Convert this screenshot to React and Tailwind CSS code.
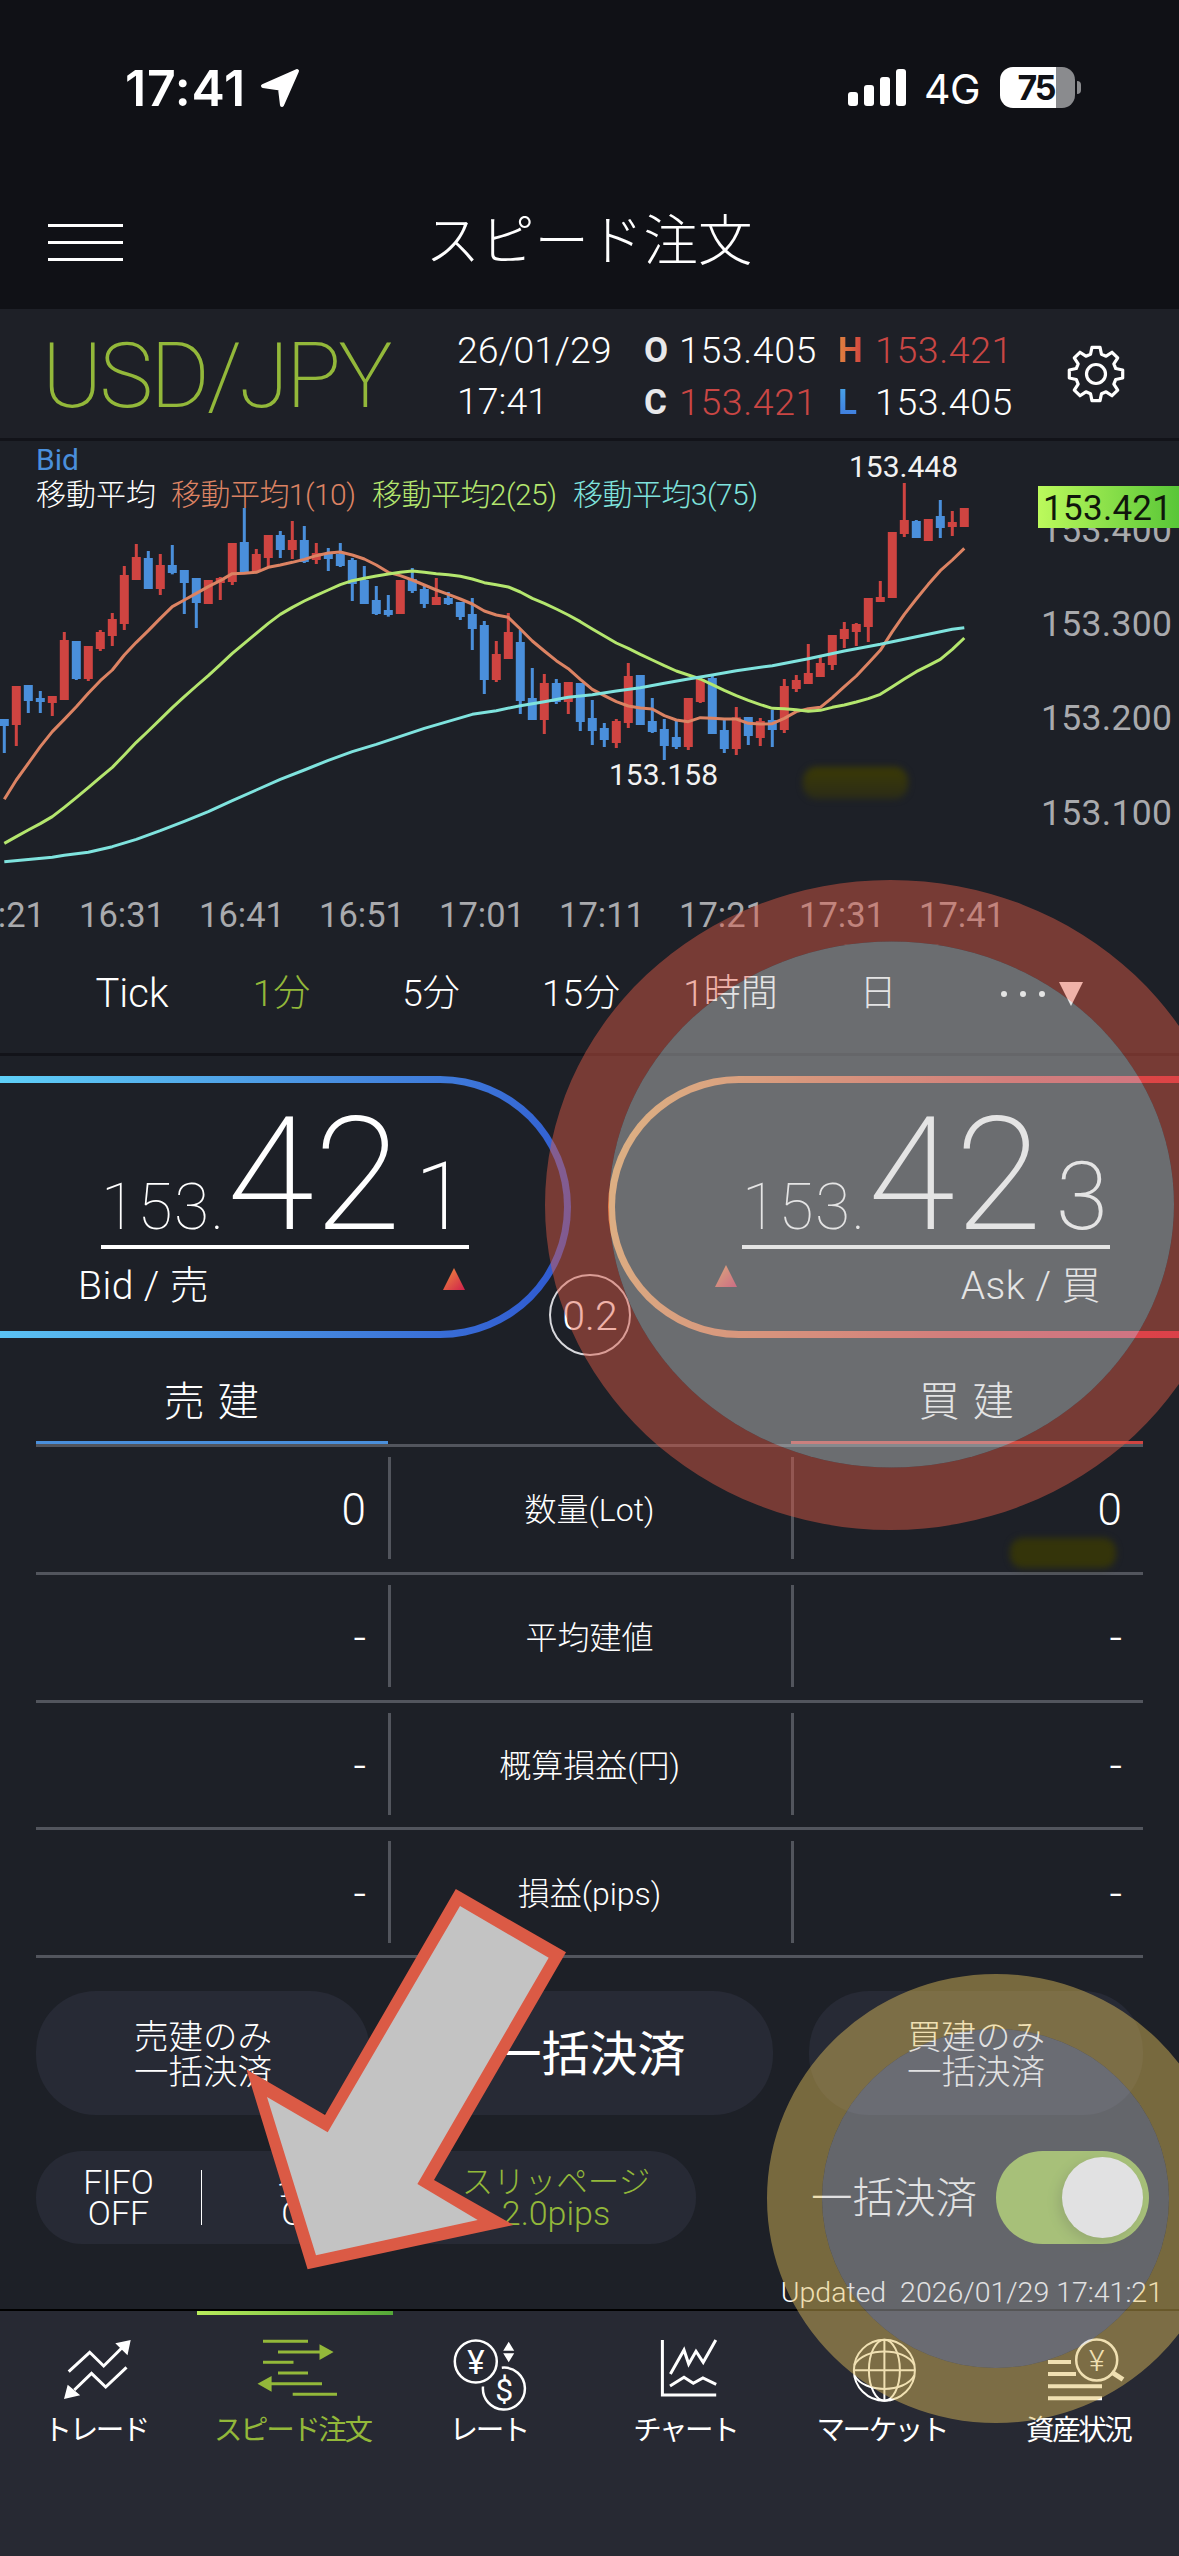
const candles = [
  // [up, bodyTop, bodyBottom, high, low]
  [0, 867, 888, 867, 969], [1, 768, 885, 768, 948], [0, 765, 813, 765, 849], [0, 804, 816, 783, 849],
  [1, 798, 819, 798, 858], [1, 630, 810, 606, 810], [0, 633, 747, 633, 750], [1, 648, 747, 648, 753],
  [1, 606, 657, 600, 663], [1, 567, 618, 549, 648], [1, 435, 582, 408, 600], [1, 381, 450, 342, 450],
  [0, 384, 477, 363, 477], [1, 405, 477, 372, 495], [0, 405, 429, 345, 433], [0, 420, 459, 420, 552],
  [0, 444, 519, 444, 594], [1, 450, 522, 450, 522], [1, 444, 459, 441, 510], [1, 339, 456, 339, 465],
  [0, 336, 426, 234, 426], [1, 372, 426, 357, 426], [1, 315, 384, 315, 414], [0, 315, 360, 303, 384],
  [1, 330, 360, 273, 387], [0, 330, 396, 288, 399], [1, 369, 390, 339, 402], [0, 372, 387, 354, 423],
  [0, 372, 408, 339, 411], [0, 390, 462, 384, 513], [0, 450, 522, 408, 522], [0, 510, 552, 468, 555],
  [0, 540, 555, 495, 560], [1, 450, 552, 450, 552], [0, 447, 483, 414, 489], [0, 477, 522, 468, 534],
  [1, 501, 525, 444, 525], [0, 504, 522, 486, 525], [0, 516, 561, 516, 570], [0, 552, 597, 504, 660],
  [0, 585, 750, 573, 792], [1, 672, 750, 633, 756], [1, 606, 687, 549, 687], [0, 636, 813, 600, 852],
  [0, 804, 870, 714, 870], [1, 759, 870, 732, 912], [0, 759, 816, 747, 822], [1, 756, 816, 756, 852],
  [0, 759, 876, 759, 903], [0, 864, 903, 810, 945], [0, 894, 930, 879, 951], [1, 873, 939, 867, 954],
  [1, 738, 879, 699, 894], [0, 735, 885, 735, 885], [0, 873, 906, 804, 909], [0, 897, 948, 867, 990],
  [0, 921, 951, 870, 957], [1, 804, 951, 804, 960], [1, 747, 816, 744, 819], [0, 744, 912, 738, 912],
  [0, 900, 957, 867, 969], [1, 862, 957, 831, 975], [0, 861, 918, 861, 945], [1, 873, 924, 864, 948],
  [0, 870, 900, 840, 951], [1, 768, 900, 747, 909], [1, 750, 777, 735, 786], [1, 729, 762, 642, 762],
  [1, 699, 741, 681, 741], [1, 615, 705, 615, 720], [1, 597, 627, 576, 654], [1, 582, 606, 579, 648],
  [1, 504, 591, 504, 636], [1, 501, 516, 453, 516], [1, 306, 504, 306, 504], [1, 270, 312, 159, 321],
  [0, 273, 324, 270, 324], [1, 267, 333, 267, 333], [0, 258, 294, 210, 324], [1, 276, 291, 243, 318],
  [1, 234, 291, 234, 291],
];

const ma10 = [
  1108, 1050, 1000, 950, 905, 868, 830, 790, 752, 720, 675, 637, 602, 565, 530, 510, 490, 470, 452, 431, 430,
  427, 412, 405, 397, 388, 377, 369, 366, 375, 387, 405, 427, 437, 450, 465, 480, 493, 507, 522, 543, 555, 562,
  597, 633, 663, 692, 716, 748, 778, 797, 815, 828, 834, 837, 857, 870, 875, 863, 865, 867, 867, 880, 882, 881,
  865, 845, 836, 832, 803, 770, 738, 700, 661, 605, 553, 507, 463, 422, 390, 355,
];

const ma25 = [
  1240, 1220, 1200, 1181, 1160, 1132, 1103, 1073, 1042, 1012, 975, 937, 903, 868, 833, 800, 768, 737, 704, 670,
  640, 610, 580, 553, 532, 513, 496, 480, 464, 452, 445, 438, 432, 427, 423, 427, 431, 434, 439, 447, 458, 464,
  471, 486, 505, 520, 537, 555, 575, 597, 618, 639, 655, 673, 690, 707, 723, 735, 747, 764, 781, 797, 811, 824,
  835, 836, 839, 844, 841, 832, 825, 816, 806, 793, 770, 747, 725, 707, 688, 658, 624,
];

const ma75 = [
  [0, 1295], [4, 1282], [5, 1276], [7, 1267], [9, 1250], [11, 1228], [13, 1202], [15, 1174], [17, 1145],
  [19, 1112], [21, 1080], [23, 1048], [25, 1020], [27, 991], [29, 965], [31, 943], [33, 919], [35, 895],
  [37, 874], [39, 853], [41, 842], [43, 827], [45, 815], [47, 802], [49, 794], [51, 783], [53, 773],
  [55, 760], [57, 747], [59, 735], [61, 722], [64, 707], [67, 686], [70, 663], [73, 643], [76, 620],
  [79, 598], [80, 593],
];

const cx = i => 4.3 + i * 12;
const cy = v => v / 3 - 11;
const toPoints = pairs => pairs.map(([i, v]) => `${cx(i)},${cy(v)}`).join(' ');

const times = ['16:21', '16:31', '16:41', '16:51', '17:01', '17:11', '17:21', '17:31', '17:41'];

const rows = [
  { label: '数量(Lot)', sell: '0', buy: '0' },
  { label: '平均建値', sell: '-', buy: '-' },
  { label: '概算損益(円)', sell: '-', buy: '-' },
  { label: '損益(pips)', sell: '-', buy: '-' },
];

function StatusBar() {
  return (
    <div className="flex h-[108px] items-end justify-between pl-[125px] pr-[98px] font-['Inter',sans-serif]">
      <div className="flex items-end gap-[12px]">
        <span className="w-[123px] text-[50px] leading-[40px] font-semibold tracking-[0.800px] whitespace-nowrap">17:41</span>
        <svg width="40" height="40" viewBox="0 0 40 40">
          <path d="M37 3 L3 18 L20 20.500 L22 37 Z" fill="white" stroke="white" strokeWidth="4" strokeLinejoin="round" />
        </svg>
      </div>
      <div className="flex items-end">
        <svg width="60" height="38" viewBox="0 0 60 38" fill="white" className="mb-[2px]">
          <rect x="0" y="24" width="10" height="14" rx="3" />
          <rect x="16" y="17" width="10" height="21" rx="3" />
          <rect x="32" y="9" width="10" height="29" rx="3" />
          <rect x="48" y="1" width="10" height="37" rx="3" />
        </svg>
        <span className="ml-[16px] w-[76px] text-[41px] leading-[37px] tracking-[-0.500px]">4G</span>
        <div className="flex items-center">
          <div className="flex h-[41px] w-[75px] items-center justify-center rounded-[13px] bg-[linear-gradient(90deg,#fff_75%,#8a8b8e_75%)]">
            <span className="mr-[3px] text-[34px] font-bold tracking-[-2px] text-[#101116]">75</span>
          </div>
          <div className="ml-[2px] h-[13px] w-[4px] rounded-r-full bg-[#8a8b8e]" />
        </div>
      </div>
    </div>
  );
}

function TitleBar() {
  return (
    <div className="flex h-[201px] items-center pl-[48px]">
      <div className="mt-[68px] flex w-[75px] flex-col gap-[14px]">
        <div className="h-[3px] bg-white" />
        <div className="h-[3px] bg-white" />
        <div className="h-[3px] bg-white" />
      </div>
      <h1 className="mt-[64px] w-[932px] text-center text-[54.500px] leading-[80px] font-light">スピード注文</h1>
    </div>
  );
}

function GearIcon() {
  const teeth = 8;
  const pts = [];
  for (let k = 0; k < teeth; k++) {
    const a = (k * 2 * Math.PI) / teeth - Math.PI / 2;
    [[-0.27, 20.5], [-0.15, 27], [0.15, 27], [0.27, 20.5]].forEach(([d, r]) => {
      pts.push(`${30 + r * Math.cos(a + d)},${30 + r * Math.sin(a + d)}`);
    });
  }
  return (
    <svg width="60" height="60" viewBox="0 0 60 60" fill="none" stroke="white" strokeWidth="3.200" strokeLinejoin="round">
      <polygon points={pts.join(' ')} />
      <circle cx="30" cy="30" r="9.500" />
    </svg>
  );
}

function PairHeader() {
  return (
    <div className="flex h-[132px] border-b-[3px] border-[#121319] bg-[#1e2027]">
      <div className="w-[457px] pt-[14px] pl-[42px] text-[91px] leading-[106px] font-extralight tracking-[-3px] text-[#93b83a]">USD/JPY</div>
      <div className="w-[187px] pt-[16px] text-[37.500px] leading-[51px] font-light">
        <div>26/01/29</div>
        <div>17:41</div>
      </div>
      <div className="grid h-[119px] grid-cols-[35px_159px_37px_153px] pt-[16px] text-[37.500px] leading-[51px] font-light tracking-[0.600px]">
        <b className="text-[35px] font-bold text-[#e8e8ea]">O</b>
        <span>153.405</span>
        <b className="text-[35px] font-bold"><span className="bg-gradient-to-r from-[#e0843f] to-[#d2403f] bg-clip-text text-transparent">H</span></b>
        <span className="text-[#c94644]">153.421</span>
        <b className="text-[35px] font-bold text-[#e8e8ea]">C</b>
        <span className="text-[#c94644]">153.421</span>
        <b className="text-[35px] font-bold"><span className="bg-gradient-to-b from-[#4aa8e8] to-[#3f74dc] bg-clip-text text-transparent">L</span></b>
        <span>153.405</span>
      </div>
      <div className="ml-[38px] pt-[35px]"><GearIcon /></div>
    </div>
  );
}

function Chart() {
  return (
    <svg width="1179" height="499" viewBox="0 0 1179 499" className="block">
      <defs>
        <linearGradient id="badge">
          <stop offset="0" stopColor="#bcfa5c" />
          <stop offset="1" stopColor="#58c637" />
        </linearGradient>
        <linearGradient id="smear" x2="0" y2="1">
          <stop offset="0" stopColor="#3b3a05" />
          <stop offset="1" stopColor="#2b2c18" />
        </linearGradient>
      </defs>
      <g fontSize="30">
        <text x="36" y="29" fill="#4a8fdb">Bid</text>
        <g fontWeight="300">
          <text x="36" y="64" fill="#fff">移動平均</text>
          <text x="171" y="64" fill="#dc8363" textLength="185">移動平均1(10)</text>
          <text x="372" y="64" fill="#b4e66e" textLength="185">移動平均2(25)</text>
          <text x="573" y="64" fill="#7fe3de" textLength="185">移動平均3(75)</text>
        </g>
        <text x="849" y="36" fill="#f2f2f2">153.448</text>
        <text x="609" y="344" fill="#f2f2f2">153.158</text>
      </g>
      {candles.map(([up, top, bottom, high, low], i) => (
        <g key={i} fill={up ? '#cf4441' : '#4a8fdb'}>
          <rect x={cx(i) - 1.5} y={cy(high)} width="3" height={(low - high) / 3} />
          <rect x={cx(i) - 4.5} y={cy(top)} width="9" height={(bottom - top) / 3} />
        </g>
      ))}
      <g fill="none" strokeWidth="3" strokeLinejoin="round">
        <polyline points={toPoints(ma10.map((v, i) => [i, v]))} stroke="#dc8363" />
        <polyline points={toPoints(ma25.map((v, i) => [i, v]))} stroke="#b4e66e" />
        <polyline points={toPoints(ma75)} stroke="#7fe3de" />
      </g>
      <rect x="803" y="326" width="105" height="32" rx="14" fill="url(#smear)" className="blur-[3px]" />
      <g fontSize="35.500" fill="#a9aaad">
        <text x="1041" y="101" textLength="131">153.400</text>
        <text x="1041" y="195" textLength="131">153.300</text>
        <text x="1041" y="289" textLength="131">153.200</text>
        <text x="1041" y="384" textLength="131">153.100</text>
        {times.map((t, i) => (
          <text key={t} x={2 + i * 120} y="486" textAnchor="middle" fontSize="34.500">{t}</text>
        ))}
      </g>
      <rect x="1038" y="45" width="141" height="42" fill="url(#badge)" />
      <text x="1043" y="79" fontSize="35" textLength="129" fill="#10160c">153.421</text>
    </svg>
  );
}

function PeriodTabs() {
  return (
    <div className="flex h-[116px] items-center border-b-[3px] border-[#121319] pb-[5px] pl-[57px] text-[37px] font-light">
      <div className="w-[150px] text-center text-[40px]">Tick</div>
      <div className="w-[149px] text-center text-[#93b83a]">1分</div>
      <div className="w-[150px] text-center">5分</div>
      <div className="w-[150px] text-center">15分</div>
      <div className="w-[149px] text-center">1時間</div>
      <div className="w-[146px] text-center">日</div>
      <div className="flex items-center pl-[49px]">
        <svg width="84" height="26" viewBox="0 0 84 26" fill="white">
          <circle cx="4" cy="13" r="3" />
          <circle cx="23" cy="13" r="3" />
          <circle cx="42" cy="13" r="3" />
          <path d="M59 1 H83 L71 25 Z" />
        </svg>
      </div>
    </div>
  );
}

function Price({ head, big, last }) {
  return (
    <div className="flex h-[134px] w-[368px] items-baseline border-b-[4px] border-white leading-[120px]">
      <span className="w-[126px] text-[64px] font-thin tracking-[1.500px]">{head}</span>
      <span className="w-[186px] text-[158px] font-extralight">{big}</span>
      <span className="w-[56px] text-center text-[95px] font-extralight">{last}</span>
    </div>
  );
}

function Triangle() {
  return (
    <svg width="22" height="22" viewBox="0 0 22 22">
      <defs>
        <linearGradient id="tri" x2="1" y2="1">
          <stop offset="0" stopColor="#f0903c" />
          <stop offset="1" stopColor="#d0204c" />
        </linearGradient>
      </defs>
      <path d="M11 0 L22 22 H0 Z" fill="url(#tri)" />
    </svg>
  );
}

function PricePanel() {
  return (
    <div className="relative flex h-[285px] justify-between pt-[20px]">
      <button className="h-[262px] w-[571px] rounded-r-full bg-[linear-gradient(105deg,#5fd0f8_0%,#4a92e2_50%,#2d55cf_100%)] py-[7px] pr-[7px] text-left">
        <div className="flex h-full w-full flex-col rounded-r-full bg-[#1d2027] pt-[32px] pl-[101px]">
          <Price head="153." big="42" last="1" />
          <div className="flex w-[368px] items-center justify-between pt-[9px]">
            <span className="-ml-[23px] text-[39px] leading-[56px] font-light tracking-[0.500px]">Bid / 売</span>
            <span className="mr-[4px] mb-[14px]"><Triangle /></span>
          </div>
        </div>
      </button>
      <button className="h-[262px] w-[571px] rounded-l-full bg-[linear-gradient(105deg,#f3a54c_0%,#e8703f_30%,#df3f3c_65%,#d82a4c_100%)] py-[7px] pl-[7px] text-left">
        <div className="flex h-full w-full flex-col rounded-l-full bg-[#1d2027] pt-[32px] pl-[127px]">
          <Price head="153." big="42" last="3" />
          <div className="flex w-[368px] items-center justify-between pt-[9px]">
            <span className="-ml-[27px] mb-[20px]"><Triangle /></span>
            <span className="mr-[9px] text-[39px] leading-[56px] font-light tracking-[0.500px]">Ask / 買</span>
          </div>
        </div>
      </button>
      <div className="absolute top-[218px] left-[549px] flex h-[82px] w-[82px] items-center justify-center rounded-full border-[2.500px] border-[#d8d8dc] pt-[3px] text-[41px] font-light">0.2</div>
    </div>
  );
}

function Positions() {
  return (
    <div className="px-[36px]">
      <div className="flex h-[106px] items-end justify-between border-b-[3px] border-[#52555d] text-[41px] font-light">
        <div className="flex h-[86px] w-[352px] items-center justify-center border-b-[3px] border-[#4a8fdb] pt-[7px]">
          <span className="tracking-[1.500px]">売 建</span>
        </div>
        <div className="flex h-[86px] w-[352px] items-center justify-center border-b-[3px] border-[#cf4441] pt-[7px]">
          <span className="tracking-[1.500px]">買 建</span>
        </div>
      </div>
      {rows.map(row => (
        <div key={row.label} className="flex h-[127.750px] items-center border-b-[3px] border-[#52555d] pb-[2px] text-[44px] font-light">
          <div className="flex h-[102px] w-[355px] items-center justify-end border-r-[3px] border-[#52555d] pt-[4px] pr-[22px]">{row.sell}</div>
          <div className="flex h-[102px] w-[400px] items-center justify-center pt-[4px] pr-[3px] text-[32px]">{row.label}</div>
          <div className="flex h-[102px] w-[352px] items-center justify-end border-l-[3px] border-[#52555d] pt-[4px] pr-[21px]">{row.buy}</div>
        </div>
      ))}
    </div>
  );
}

function Actions() {
  return (
    <div className="flex h-[351px] flex-col px-[36px] pt-[33px] font-light">
      <div className="flex gap-[36px] text-center">
        <button className="h-[124px] w-[334px] rounded-[60px] bg-[#272a35] pt-[3px] text-[34.500px] leading-[35px]">売建のみ<br />一括決済</button>
        <button className="h-[124px] w-[367px] rounded-[60px] bg-[#272a35] pt-[4px] text-[48px] font-normal">一括決済</button>
        <button className="h-[124px] w-[334px] rounded-[60px] bg-[#272a35] pt-[3px] text-[34.500px] leading-[35px]">買建のみ<br />一括決済</button>
      </div>
      <div className="mt-[36px] flex items-center justify-between">
        <div className="flex h-[93px] w-[660px] items-center rounded-[46px] bg-[#272a35] text-center text-[34px] leading-[31px]">
          <div className="w-[165px]">FIFO<br />OFF</div>
          <div className="h-[55px] w-[1px] bg-white" />
          <div className="w-[220px]">損切<br />OFF</div>
          <div className="w-[270px] pr-[2px] text-[#93b83a]"><span className="text-[31.500px]">スリッページ</span><br />2.0pips</div>
        </div>
        <div className="-mr-[6px] flex items-center gap-[19px]">
          <span className="pt-[4px] text-[41.500px]">一括決済</span>
          <div className="flex h-[93px] w-[153px] items-center justify-end rounded-full bg-[#95c340] pr-[6px]">
            <div className="h-[81px] w-[81px] rounded-full bg-white shadow-[-4px_4px_12px_rgba(0,0,0,0.2)]" />
          </div>
        </div>
      </div>
      <div className="-mr-[20px] mt-[29px] text-right text-[28.500px] leading-[40px] whitespace-pre">Updated  2026/01/29 17:41:21</div>
    </div>
  );
}

function TradeIcon() {
  return (
    <svg width="88" height="76" viewBox="0 0 88 76" fill="none" stroke="currentColor" strokeWidth="3">
      <path d="M14.700 35.700 L35.700 16.300 L49.700 30 L68.500 11.300" />
      <path d="M72.500 31.300 L51.700 51 L37.500 37.300 L20.300 54" />
      <path d="M76.700 4 L61.300 7.300 L73.500 19.300 Z M10 63 L13.700 48.700 L26.200 59.300 Z" fill="currentColor" stroke="none" />
    </svg>
  );
}

function SpeedIcon() {
  return (
    <svg width="88" height="76" viewBox="0 0 88 76" fill="none" stroke="currentColor" strokeWidth="3">
      <path d="M12 5.300 H57 M27 16 H69 M12 26.300 H42.500 M27 37 H57 M20 47.700 H71 M41.700 58.300 H86" />
      <path d="M82.600 16 L68.500 8.300 V24 Z M6.500 47.700 L20.600 40 V55.700 Z" fill="currentColor" stroke="none" />
    </svg>
  );
}

function RateIcon() {
  return (
    <svg width="88" height="76" viewBox="0 0 88 76" fill="none" stroke="currentColor" strokeWidth="2.500">
      <circle cx="28.800" cy="25.500" r="21" />
      <path d="M54.800 31.700 A21 21 0 1 1 36 50.500" />
      <path d="M61.700 5.700 L67.200 14.700 H56.200 Z M61.700 26.300 L67.200 17.300 H56.200 Z" fill="currentColor" stroke="none" />
      <g fill="currentColor" stroke="none" fontSize="33" textAnchor="middle">
        <text x="28.800" y="37.500">¥</text>
        <text x="57.300" y="64.500" fontSize="32">$</text>
      </g>
    </svg>
  );
}

function ChartIcon() {
  return (
    <svg width="88" height="76" viewBox="0 0 88 76" fill="none" stroke="currentColor" strokeWidth="3">
      <path d="M18.400 4 V59 H72.200" />
      <path d="M26.400 38 L40 14 L44.700 28 L52 15.300 L59.200 26.300 L71.800 4" />
      <path d="M26 50 L40 41.300 L49.300 47.300 L58.900 42 L72.200 48.300" />
    </svg>
  );
}

function GlobeIcon() {
  return (
    <svg width="88" height="76" viewBox="0 0 88 76" fill="none" stroke="currentColor" strokeWidth="2">
      <circle cx="44.400" cy="34.200" r="30.500" />
      <ellipse cx="44.400" cy="34.200" rx="15.500" ry="30.500" />
      <path d="M44.400 3.700 V64.700 M13.900 34.200 H74.900" />
      <path d="M14.500 29 C24 11 65 11 74.300 29 M14.500 39.400 C24 57.400 65 57.400 74.300 39.400" />
    </svg>
  );
}

function AssetsIcon() {
  return (
    <svg width="88" height="76" viewBox="0 0 88 76" fill="none" stroke="currentColor" strokeWidth="4">
      <path d="M11 26 H34 M11 38 H39 M11 50.300 H65 M11 62.300 H65" />
      <circle cx="59.700" cy="24" r="20.500" strokeWidth="2.500" />
      <path d="M74.500 36 L86 43.500" strokeWidth="5" />
      <text x="59.700" y="35" fontSize="30" fontWeight="300" textAnchor="middle" fill="currentColor" stroke="none">¥</text>
    </svg>
  );
}

const tabs = [
  { label: 'トレード', Icon: TradeIcon },
  { label: 'スピード注文', Icon: SpeedIcon, active: true },
  { label: 'レート', Icon: RateIcon },
  { label: 'チャート', Icon: ChartIcon },
  { label: 'マーケット', Icon: GlobeIcon },
  { label: '資産状況', Icon: AssetsIcon },
];

function BottomNav() {
  return (
    <nav className="grid h-[247px] grid-cols-6 border-t-2 border-black bg-[#272933]">
      {tabs.map(({ label, Icon, active }) => (
        <div key={label} className={`flex flex-col items-center ${active ? 'text-[#93b83a]' : 'text-white'}`}>
          <div className={`h-[4px] w-full ${active ? 'bg-gradient-to-r from-[#b9ec5c] to-[#54a838]' : ''}`} />
          <div className="mt-[21px]"><Icon /></div>
          <span className="-mt-[3px] -ml-[5px] text-[28.500px] leading-[44px] tracking-[-2.400px] whitespace-nowrap">{label}</span>
        </div>
      ))}
    </nav>
  );
}

function Annotations() {
  return (
    <svg width="1179" height="2556" viewBox="0 0 1179 2556" className="pointer-events-none absolute top-0 left-0">
      <rect x="1010" y="1538" width="106" height="30" rx="13" fill="#34340a" className="blur-[3px]" />
      <path
        fillRule="evenodd"
        fill="rgb(222 90 71 / 0.465)"
        d="M545 1205 a345.500 325 0 1 0 691 0 a345.500 325 0 1 0 -691 0 Z M609 1204.500 a282.500 263 0 1 0 565 0 a282.500 263 0 1 0 -565 0 Z"
      />
      <ellipse cx="891.500" cy="1204.500" rx="282.500" ry="263" fill="rgb(197 197 197 / 0.465)" />
      <path
        fillRule="evenodd"
        fill="rgb(222 188 90 / 0.465)"
        d="M767 2198.500 a229 224.500 0 1 0 458 0 a229 224.500 0 1 0 -458 0 Z M822 2198.500 a173.500 169.500 0 1 0 347 0 a173.500 169.500 0 1 0 -347 0 Z"
      />
      <ellipse cx="995.500" cy="2198.500" rx="173.500" ry="169.500" fill="rgb(188 188 190 / 0.45)" />
      <path d="M455.800 1889 L566 1952.300 L434 2180 L513.400 2225 L307.600 2269.300 L246.400 2069.300 L325 2115 Z" fill="#db5a45" />
      <path d="M460 1906 L548.700 1957.700 L417.400 2184 L477.700 2220 L316 2255.300 L267 2097 L327.700 2132.300 Z" fill="#c3c3c3" />
    </svg>
  );
}

export default function App() {
  return (
    <div className="relative h-[2556px] w-[1179px] overflow-hidden bg-[#1d2027] font-['Roboto','Noto_Sans_CJK_JP',sans-serif] text-white">
      <div className="bg-[#101116]">
        <StatusBar />
        <TitleBar />
      </div>
      <PairHeader />
      <Chart />
      <PeriodTabs />
      <PricePanel />
      <Positions />
      <Actions />
      <BottomNav />
      <Annotations />
    </div>
  );
}
